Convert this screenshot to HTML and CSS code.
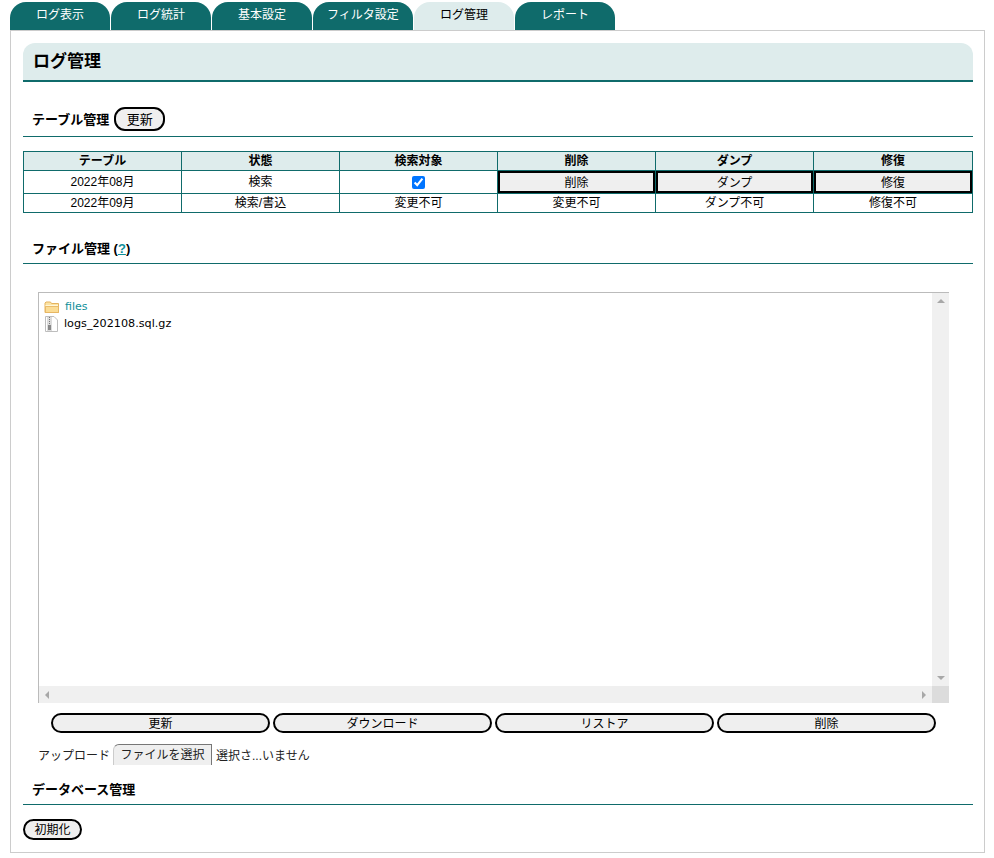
FILE: index.html
```html
<!DOCTYPE html>
<html lang="ja">
<head>
    <meta charset="UTF-8">
    <meta name="viewport" content="width=device-width, initial-scale=1.0">
    <title>ログ管理</title>
    <link rel="stylesheet" href="styles.css">
</head>
<body>

    <!-- タブ -->
    <div class="tabs">
        <a class="tab">ログ表示</a>
        <a class="tab">ログ統計</a>
        <a class="tab">基本設定</a>
        <a class="tab">フィルタ設定</a>
        <a class="tab tab-active">ログ管理</a>
        <a class="tab">レポート</a>
    </div>

    <div class="panel">
        <h1 class="page-title">ログ管理</h1>

        <!-- テーブル管理 -->
        <div class="section-head section-table">
            <span class="section-label">テーブル管理</span>
            <button class="btn btn-update">更新</button>
        </div>

        <table class="log-table">
            <tr>
                <th>テーブル</th>
                <th>状態</th>
                <th>検索対象</th>
                <th>削除</th>
                <th>ダンプ</th>
                <th class="col-last">修復</th>
            </tr>
            <tr class="row-action">
                <td>2022年08月</td>
                <td>検索</td>
                <td><input type="checkbox" class="check" checked></td>
                <td class="cell-btn"><button class="btn-cell">削除</button></td>
                <td class="cell-btn"><button class="btn-cell">ダンプ</button></td>
                <td class="cell-btn"><button class="btn-cell">修復</button></td>
            </tr>
            <tr>
                <td>2022年09月</td>
                <td>検索/書込</td>
                <td>変更不可</td>
                <td>変更不可</td>
                <td>ダンプ不可</td>
                <td>修復不可</td>
            </tr>
        </table>

        <!-- ファイル管理 -->
        <div class="section-head section-file">
            <span class="section-label">ファイル管理 (<a class="help">?</a>)</span>
        </div>

        <div class="file-box">
            <div class="file-main">
                <div class="file-list">
                    <div class="file-item">
                        <svg class="icon-folder" width="16" height="14" viewBox="0 0 16 14">
                            <path d="M1 3V12.500H14.500V3.500H7.500L6.500 2H2Z" fill="#fbe3a4" stroke="#e5b35e"/>
                            <path d="M1.500 5.500H14" stroke="#fff6d8"/>
                            <path d="M1.500 12.500V6.500H14.500V12.500Z" fill="#fbdc94" stroke="#e5b35e" stroke-width="0.800"/>
                        </svg>
                        <a class="file-link">files</a>
                    </div>
                    <div class="file-item">
                        <svg class="icon-zip" width="15" height="16" viewBox="0 0 15 16">
                            <path d="M1.500 .5H10L13.500 4V15.500H1.500Z" fill="#fff" stroke="#bdbdbd"/>
                            <rect x="3" y="1" width="5" height="14" fill="#dcdcdc"/>
                            <path d="M5.500 1V9" stroke="#777" stroke-dasharray="1 1"/>
                            <rect x="4" y="9" width="3" height="5" fill="#888"/>
                        </svg>
                        <span class="file-name">logs_202108.sql.gz</span>
                    </div>
                </div>
                <div class="scroll-v">
                    <span class="arrow arrow-up"></span>
                    <span class="arrow arrow-down"></span>
                </div>
            </div>
            <div class="scroll-h">
                <div class="scroll-track">
                    <span class="arrow arrow-left"></span>
                    <span class="arrow arrow-right"></span>
                </div>
                <div class="scroll-corner"></div>
            </div>
        </div>

        <div class="file-actions">
            <button class="btn btn-wide">更新</button>
            <button class="btn btn-wide">ダウンロード</button>
            <button class="btn btn-wide">リストア</button>
            <button class="btn btn-wide">削除</button>
        </div>

        <div class="upload">
            <span>アップロード</span>
            <span class="file-choose">ファイルを選択</span>
            <span>選択さ...いません</span>
        </div>

        <!-- データベース管理 -->
        <div class="section-head section-db">
            <span class="section-label">データベース管理</span>
        </div>

        <button class="btn btn-init">初期化</button>
    </div>

</body>
</html>
```

FILE: styles.css
```css
* {
    box-sizing: border-box;
}

body {
    margin: 0;
    padding: 2px 9px 0 10px;
    background-color: white;
    color: black;
    font-family: "Liberation Sans", "Noto Sans CJK JP", sans-serif;
    font-size: 12px;
}

.tabs {
    display: flex;
    gap: 1px;
    height: 28px;
}

.tab {
    width: 100px;
    height: 28px;
    padding-top: 5px;
    background-color: #0f6b6b;
    color: white;
    border-radius: 16px 16px 0 0;
    text-align: center;
    line-height: 16px;
}

.tab-active {
    background-color: #deecec;
    color: black;
}

.panel {
    height: 823px;
    padding: 12px 11px 0 12px;
    border: 1px solid #ccc;
}

.page-title {
    height: 39px;
    margin: 0;
    padding: 8px 0 0 10px;
    background-color: #deecec;
    border-bottom: 2px solid #0f6b6b;
    border-radius: 12px 12px 0 0;
    font-size: 17px;
    line-height: 22px;
}

.section-head {
    display: flex;
    align-items: center;
    border-bottom: 1px solid #0f6b6b;
}

.section-label {
    font-size: 13px;
    font-weight: bold;
}

.section-table {
    height: 30px;
    margin-top: 25px;
    padding: 0 0 5px 9px;
    gap: 5px;
}

.section-table .section-label {
    margin-bottom: 2px;
}

.section-file {
    height: 32px;
    margin-top: 19px;
    padding: 0 0 1px 9px;
}

.section-db {
    height: 29px;
    margin-top: 11px;
    padding: 0 0 4px 9px;
}

.help {
    color: #0f8f9a;
    text-decoration: underline;
}

.btn {
    background-color: #efefef;
    color: black;
    border: 2px solid black;
    border-radius: 11px;
    font-family: inherit;
    font-size: 12px;
    line-height: 1;
    padding: 0;
    cursor: pointer;
}

.btn-update {
    width: 51px;
    height: 24px;
    font-size: 13px;
}

.btn-wide {
    width: 219px;
    height: 20px;
    padding-top: 2px;
}

.btn-init {
    display: block;
    width: 59px;
    height: 21px;
    margin-top: 14px;
}

.log-table {
    width: 950px;
    margin-top: 14px;
    border-collapse: collapse;
    table-layout: fixed;
}

.log-table th,
.log-table td {
    height: 19px;
    padding: 0;
    border: 1px solid #0f6b6b;
    text-align: center;
    font-size: 12px;
    line-height: 17px;
}

.log-table th {
    width: 158px;
    background-color: #deecec;
}

.log-table .col-last {
    width: auto;
}

.row-action td {
    height: 23px;
}

.log-table .cell-btn {
    padding: 0;
}

.btn-cell {
    display: block;
    width: 100%;
    height: 22px;
    padding: 0 0 2px;
    background-color: #efefef;
    border: 2px solid black;
    font-family: inherit;
    font-size: 12px;
}

.check {
    display: block;
    width: 13px;
    height: 13px;
    margin: 0 auto;
    accent-color: #0075ff;
}

.file-box {
    width: 911px;
    height: 411px;
    margin: 28px 0 0 15px;
    display: flex;
    flex-direction: column;
    border-top: 1px solid #bbb;
    border-left: 1px solid #bbb;
}

.file-main {
    flex: 1;
    display: flex;
    min-height: 0;
}

.file-list {
    flex: 1;
    padding: 5px 0 0 5px;
    font-family: "DejaVu Sans", "Noto Sans CJK JP", sans-serif;
    font-size: 11px;
}

.file-item {
    display: flex;
    align-items: center;
    gap: 4px;
    height: 17px;
}

.file-link {
    color: #0f8f9a;
    margin-left: 1px;
}

.file-name {
    font-size: 11.200px;
    margin-left: 1px;
}

.icon-zip {
    flex-shrink: 0;
}

.scroll-v {
    width: 17px;
    background-color: #f0f0f0;
    display: flex;
    flex-direction: column;
    justify-content: space-between;
    align-items: center;
    padding: 6px 0;
}

.scroll-h {
    height: 17px;
    display: flex;
}

.scroll-track {
    flex: 1;
    background-color: #f0f0f0;
    display: flex;
    justify-content: space-between;
    align-items: center;
    padding: 0 6px 0 6px;
}

.scroll-corner {
    width: 17px;
    background-color: #dcdcdc;
}

.arrow {
    display: block;
    width: 0;
    height: 0;
    border: 4px solid transparent;
}

.arrow-up {
    border-top: 0;
    border-bottom-color: #a8a8a8;
}

.arrow-down {
    border-bottom: 0;
    border-top-color: #a8a8a8;
}

.arrow-left {
    border-left: 0;
    border-right-color: #a8a8a8;
}

.arrow-right {
    border-right: 0;
    border-left-color: #a8a8a8;
}

.file-actions {
    display: flex;
    gap: 3px;
    margin: 10px 0 0 28px;
}

.upload {
    display: flex;
    align-items: center;
    height: 21px;
    margin: 11px 0 0 15px;
    font-size: 12px;
    color: #222;
}

.file-choose {
    width: 99px;
    height: 21px;
    margin: 0 4px 0 3px;
    background-color: #efefef;
    border-top: 1px solid #777;
    border-right: 1px solid #777;
    border-left: 1px solid #ccc;
    border-radius: 6px 0 0 0;
    text-align: center;
    line-height: 20px;
}
```
